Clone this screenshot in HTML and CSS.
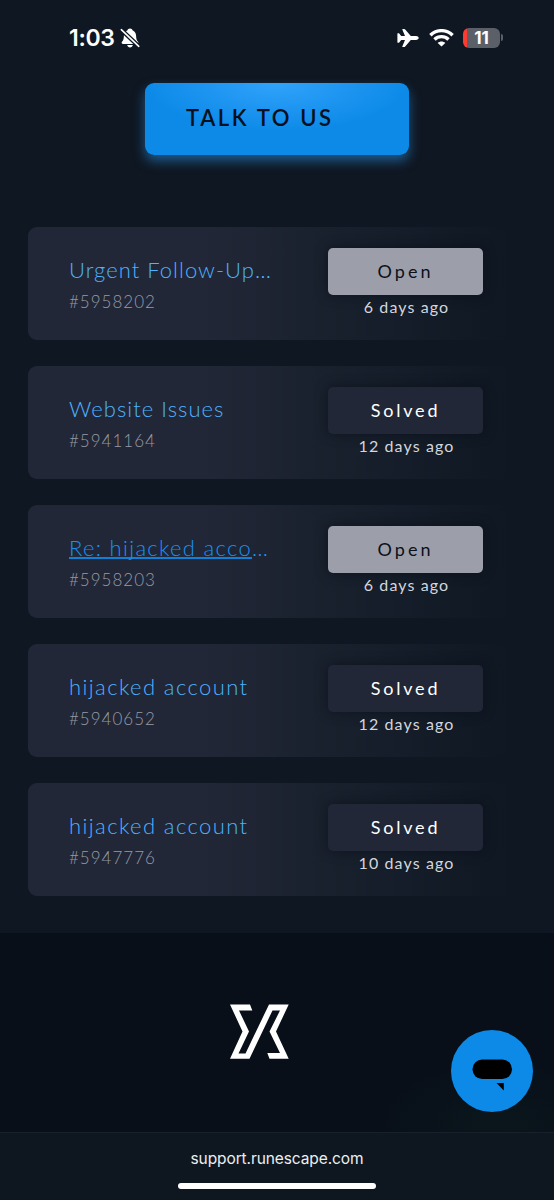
FILE: index.html
```html
<!DOCTYPE html>
<html lang="en">
<head>
    <meta charset="UTF-8">
    <meta name="viewport" content="width=device-width, initial-scale=1.0">
    <title>Support requests</title>
    <link rel="stylesheet" href="styles.css">
</head>
<body>
    <header class="status-bar">
        <div class="status-left">
            <span class="clock">1:03</span>
            <svg class="bell" viewBox="0 0 20 20" width="20" height="20">
                <path fill="#fff" d="M10 0.6c1.5 0 2.2 0.8 2.5 1.7 2.3 1 3.5 2.900 3.600 5.400 0.100 3.400 0.700 4.600 1.800 5.900 0.900 1.100 0.500 2.400-1 2.400H3.100c-1.500 0-1.900-1.300-1-2.400 1.100-1.300 1.700-2.500 1.800-5.900 0.100-2.500 1.300-4.400 3.600-5.400C7.800 1.400 8.500 0.600 10 0.600z"/>
                <path fill="#fff" d="M7.200 17.100h5.600c-0.300 1.500-1.400 2.300-2.800 2.300s-2.500-0.800-2.800-2.300z"/>
                <path stroke="#0f1722" stroke-width="4.200" d="M0 0.500L19.500 19"/>
                <path stroke="#fff" stroke-width="1.600" stroke-linecap="round" d="M1.300 1.700L18.800 18.300"/>
            </svg>
        </div>
        <div class="status-right">
            <svg class="plane" viewBox="0 0 22 20" width="22" height="20">
                <path fill="#fff" d="M19 8.100c1.500 0 2.700 0.900 2.700 1.900s-1.200 1.900-2.700 1.900h-5.200L8.200 18.500c-0.300 0.400-0.600 0.600-1 0.600H5.700c-0.400 0-0.500-0.300-0.400-0.600L8 11.900H4.200l-2 2.500c-0.200 0.300-0.400 0.400-0.700 0.400H0.800c-0.300 0-0.500-0.200-0.400-0.500V5.700c-0.100-0.300 0.100-0.500 0.400-0.500h0.700c0.300 0 0.500 0.100 0.700 0.400l2 2.500H8L5.300 1.500c-0.100-0.300 0-0.600 0.400-0.600h1.500c0.400 0 0.700 0.200 1 0.600l5.600 6.600z"/>
            </svg>
            <svg class="wifi" viewBox="0 0 25 18" width="25" height="18">
                <g fill="none" stroke="#fff" stroke-width="3.400">
                    <path d="M1.400 6.300C7.600 0.100 17.400 0.100 23.600 6.300"/>
                    <path d="M5.500 10.500C9.400 6.700 15.600 6.700 19.500 10.500"/>
                </g>
                <path fill="#fff" d="M12.500 17.600L8.700 13.900c2.100-2 5.500-2 7.600 0z"/>
            </svg>
            <div class="battery"><span>11</span></div>
            <div class="battery-tip"></div>
        </div>
    </header>

    <main class="content">
        <a class="talk-btn">TALK TO US</a>

        <div class="tickets">
            <div class="ticket">
                <div class="ticket-info">
                    <div class="ticket-title"><a>Urgent Follow-Up</a>…</div>
                    <div class="ticket-id">#5958202</div>
                </div>
                <div class="ticket-state">
                    <div class="badge open">Open</div>
                    <div class="ago">6 days ago</div>
                </div>
            </div>
            <div class="ticket">
                <div class="ticket-info">
                    <div class="ticket-title"><a>Website Issues</a></div>
                    <div class="ticket-id">#5941164</div>
                </div>
                <div class="ticket-state">
                    <div class="badge">Solved</div>
                    <div class="ago">12 days ago</div>
                </div>
            </div>
            <div class="ticket">
                <div class="ticket-info">
                    <div class="ticket-title wide active"><a>Re: hijacked acco</a>…</div>
                    <div class="ticket-id">#5958203</div>
                </div>
                <div class="ticket-state">
                    <div class="badge open">Open</div>
                    <div class="ago">6 days ago</div>
                </div>
            </div>
            <div class="ticket">
                <div class="ticket-info">
                    <div class="ticket-title wide"><a>hijacked account</a></div>
                    <div class="ticket-id">#5940652</div>
                </div>
                <div class="ticket-state">
                    <div class="badge">Solved</div>
                    <div class="ago">12 days ago</div>
                </div>
            </div>
            <div class="ticket">
                <div class="ticket-info">
                    <div class="ticket-title wide"><a>hijacked account</a></div>
                    <div class="ticket-id">#5947776</div>
                </div>
                <div class="ticket-state">
                    <div class="badge">Solved</div>
                    <div class="ago">10 days ago</div>
                </div>
            </div>
        </div>
    </main>

    <footer class="footer">
        <svg class="logo" viewBox="0 0 60 56" width="60" height="56">
            <path fill="#fff" d="M0 0.500H20L22.300 6.500H9L19 27.500L8.500 49.500H15.500L39 0.500H58.700L46 27.500L58.700 54.700H39.500L37.300 49H50L39.500 27.500L50 6.500H42.500L19.500 54.700H0L12.500 27.500z"/>
        </svg>
    </footer>

    <div class="url-bar">
        <div class="url">support.runescape.com</div>
        <div class="home-indicator"></div>
    </div>

    <div class="chat">
        <svg viewBox="0 0 82 82" width="82" height="82">
            <rect x="21.500" y="29.500" width="39.500" height="19.500" rx="9.700" fill="#000"/>
            <path d="M45.500 53H52.800V60.600z" fill="#000"/>
        </svg>
    </div>
</body>
</html>
```
FILE: styles.css
```css
* {
    box-sizing: border-box;
}
body {
    margin: 0;
    height: 1200px;
    display: flex;
    flex-direction: column;
    position: relative;
    overflow: hidden;
    background-color: #0f1722;
    color: #fff;
    font-family: Lato, 'Open Sans', sans-serif;
}
.status-bar {
    height: 75px;
    padding: 0 51px 0 69px;
    display: flex;
    justify-content: space-between;
    align-items: center;
    font-family: Inter, 'Liberation Sans', sans-serif;
}
.status-left {
    display: flex;
    align-items: center;
    gap: 5px;
}
.clock {
    font-size: 23px;
    font-weight: 600;
    line-height: 28px;
    letter-spacing: -0.3px;
}
.status-right {
    display: flex;
    align-items: center;
}
.wifi {
    margin-left: 10px;
}
.battery {
    width: 37px;
    height: 20px;
    margin-left: 9px;
    border-radius: 6px;
    background: linear-gradient(to right, #ff3b30 4px, #5b5f67 4px);
    font-size: 17px;
    font-weight: 700;
    line-height: 20px;
    text-align: center;
}
.battery-tip {
    width: 2px;
    height: 7px;
    margin-left: 1px;
    border-radius: 0 3px 3px 0;
    background-color: #5b5f67;
}
.content {
    height: 858px;
    padding: 8px 28px 0;
}
.talk-btn {
    display: block;
    width: 264px;
    height: 72px;
    margin: 0 0 72px 117px;
    padding-left: 41px;
    border-radius: 9px;
    background: radial-gradient(ellipse 130px 48px at 50% 0, #31a3fb, #0d8ae8);
    box-shadow: 0 6px 12px rgba(38, 134, 208, 0.6);
    color: #06101d;
    font-size: 22px;
    font-weight: 600;
    line-height: 70px;
    letter-spacing: 2.6px;
}
.tickets {
    display: flex;
    flex-direction: column;
    gap: 26px;
}
.ticket {
    height: 113px;
    padding: 21px 43px 0 41px;
    display: flex;
    justify-content: space-between;
    border-radius: 9px;
    background: linear-gradient(to right, #222737 0%, #222737 35%, #1b222f 55%, #141d29 75%, #0f1722 97%);
}
.ticket-info {
    padding-top: 8px;
    font-weight: 300;
}
.ticket-title {
    height: 29px;
    font-size: 22px;
    line-height: 28px;
    letter-spacing: 1.03px;
    color: #4db2ff;
    white-space: nowrap;
}
.wide {
    letter-spacing: 1.4px;
}
.active {
    color: #1792f0;
    letter-spacing: 1.3px;
}
.active a {
    text-decoration: underline #0f80d6;
    text-decoration-skip-ink: none;
    text-decoration-thickness: 2px;
}
.ticket-id {
    font-size: 17px;
    line-height: 33px;
    letter-spacing: 1px;
    color: #959aa5;
}
.ticket-state {
    width: 155px;
    text-align: center;
}
.badge {
    height: 47px;
    border-radius: 5px;
    background-color: #222737;
    box-shadow: 0 0 12px rgba(8, 13, 24, 0.6);
    font-size: 18px;
    line-height: 47px;
    letter-spacing: 2.8px;
}
.open {
    background-color: #9c9faa;
    color: #0b1019;
    letter-spacing: 3px;
}
.ago {
    padding-left: 2px;
    font-size: 16px;
    line-height: 24px;
    letter-spacing: 1.1px;
    color: #d3d6dc;
}
.footer {
    height: 199px;
    padding-top: 71px;
    padding-left: 230px;
    background: radial-gradient(ellipse 120px 60px at 90% 95%, #0a161c, #080f19);
}
.logo {
    display: block;
}
.url-bar {
    flex: 1;
    border-top: 1px solid #17202b;
    display: flex;
    flex-direction: column;
    align-items: center;
    background-color: #0e1620;
}
.url {
    margin-top: 16px;
    font-family: Inter, 'Liberation Sans', sans-serif;
    font-size: 15.5px;
    line-height: 20px;
    letter-spacing: -0.1px;
    color: #eceef1;
}
.home-indicator {
    width: 198px;
    height: 6px;
    margin-top: 14px;
    border-radius: 3px;
    background-color: #fff;
}
.chat {
    position: absolute;
    top: 1030px;
    left: 451px;
    width: 82px;
    height: 82px;
    border-radius: 50%;
    background-color: #0d8ae8;
}
```
